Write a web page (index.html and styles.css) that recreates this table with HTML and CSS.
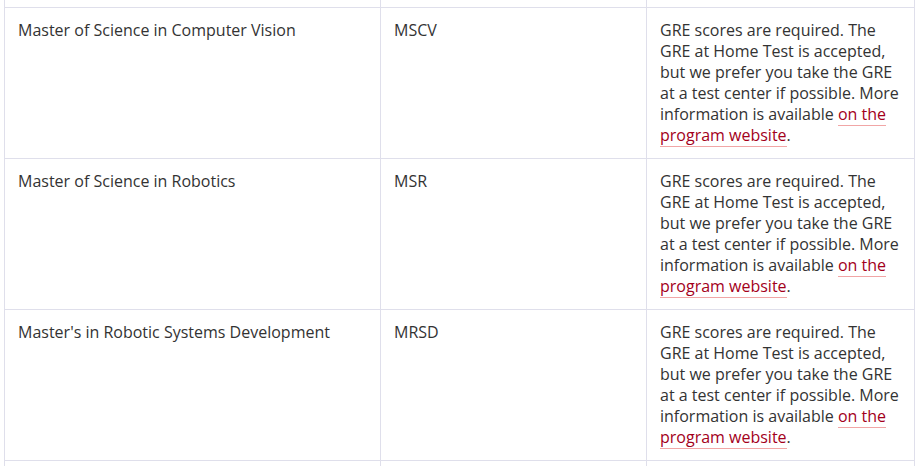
FILE: index.html
```html
<!DOCTYPE html>
<html lang="en">
<head>
<meta charset="utf-8">
<title>Programs</title>
<link rel="stylesheet" href="styles.css">
</head>
<body>
<div class="page">
<table class="programs">
  <tbody>
    <tr class="stub">
      <td class="c-name"></td>
      <td class="c-abbr"></td>
      <td class="c-note"></td>
    </tr>
    <tr>
      <td class="c-name">Master of Science in Computer Vision</td>
      <td class="c-abbr">MSCV</td>
      <td class="c-note">GRE scores are required. The GRE at Home Test is accepted, but we prefer you take the GRE at a test center if possible. More information is available <a href="#" class="link">on the program website</a>.</td>
    </tr>
    <tr>
      <td class="c-name">Master of Science in Robotics</td>
      <td class="c-abbr">MSR</td>
      <td class="c-note">GRE scores are required. The GRE at Home Test is accepted, but we prefer you take the GRE at a test center if possible. More information is available <a href="#" class="link">on the program website</a>.</td>
    </tr>
    <tr>
      <td class="c-name">Master's in Robotic Systems Development</td>
      <td class="c-abbr">MRSD</td>
      <td class="c-note">GRE scores are required. The GRE at Home Test is accepted, but we prefer you take the GRE at a test center if possible. More information is available <a href="#" class="link">on the program website</a>.</td>
    </tr>
    <tr class="stub">
      <td class="c-name"></td>
      <td class="c-abbr"></td>
      <td class="c-note"></td>
    </tr>
  </tbody>
</table>
</div>
</body>
</html>
```
FILE: styles.css
```css
html, body {
  margin: 0;
  padding: 0;
  background: #ffffff;
}
.page {
  padding: 0 4px;
  height: 466px;
  overflow: hidden;
}
.programs {
  width: 910px;
  table-layout: fixed;
  border-collapse: separate;
  border-spacing: 0;
  border-left: 1px solid #dfdfeb;
  font-family: "Open Sans", "Noto Sans", sans-serif;
  font-size: 16px;
  line-height: 21px;
  color: #333333;
}
.programs td {
  box-sizing: border-box;
  vertical-align: top;
  text-align: left;
  padding: 12px 13px;
  border-right: 1px solid #dfdfeb;
  border-bottom: 1px solid #dfdfeb;
}
.programs .c-name { width: 376px; }
.programs .c-abbr { width: 266px; }
.programs .c-note { width: 268px; }
.programs tr.stub td {
  height: 8px;
  padding: 0;
}
.link {
  color: #a3001b;
  text-decoration: none;
  border-bottom: 1px solid #f1a6a6;
}
```
